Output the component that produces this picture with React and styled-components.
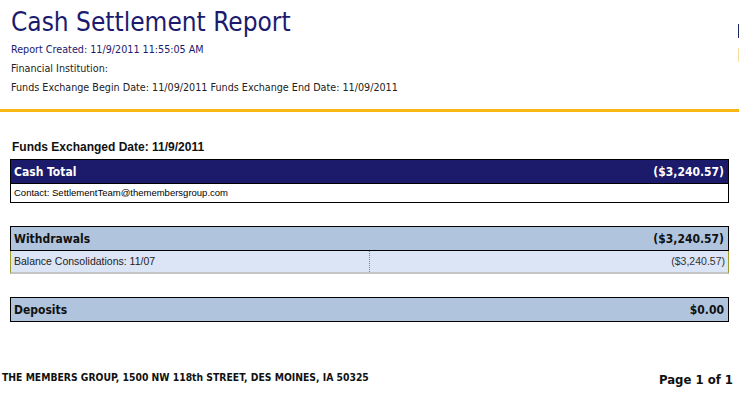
import { styled, createGlobalStyle } from "styled-components";

const GlobalStyle = createGlobalStyle`
  html, body {
    margin: 0;
    padding: 0;
    background: #fff;
  }
  body {
    font-family: "DejaVu Sans", Verdana, sans-serif;
    overflow: hidden;
  }
`;

const sections = [
  {
    title: "Cash Total",
    amount: "($3,240.57)",
    dark: true,
    note: "Contact: SettlementTeam@themembersgroup.com",
  },
  {
    title: "Withdrawals",
    amount: "($3,240.57)",
    rows: [{ label: "Balance Consolidations: 11/07", amount: "($3,240.57)" }],
  },
  { title: "Deposits", amount: "$0.00" },
];

const App = () => {
  return (
    <Page>
      <GlobalStyle />
      <Header>
        <HeaderText>
          <Title>Cash Settlement Report</Title>
          <Meta $blue>Report Created: 11/9/2011 11:55:05 AM</Meta>
          <Meta>Financial Institution:</Meta>
          <Meta>
            Funds Exchange Begin Date: 11/09/2011 Funds Exchange End Date:
            11/09/2011
          </Meta>
        </HeaderText>
        <EdgeMarks>
          <span className="navy" />
          <span className="gold" />
        </EdgeMarks>
      </Header>

      <Body>
        <DateHeading>Funds Exchanged Date: 11/9/2011</DateHeading>
        {sections.map((s) => (
          <Section key={s.title}>
            <SectionHead $dark={s.dark}>
              <span>{s.title}</span>
              <span>{s.amount}</span>
            </SectionHead>
            {s.note && <Note>{s.note}</Note>}
            {s.rows &&
              s.rows.map((r) => (
                <DetailRow key={r.label}>
                  <div className="label">{r.label}</div>
                  <div className="amount">{r.amount}</div>
                </DetailRow>
              ))}
          </Section>
        ))}
      </Body>

      <Footer>
        <span className="address">
          THE MEMBERS GROUP, 1500 NW 118th STREET, DES MOINES, IA 50325
        </span>
        <span className="page">Page 1 of 1</span>
      </Footer>
    </Page>
  );
};

export default App;

const Page = styled.div`
  width: 739px;
  height: 395px;
  display: flex;
  flex-direction: column;
`;

const Header = styled.header`
  display: flex;
  justify-content: space-between;
  border-bottom: 3px solid #f8b712;
  height: 112px;
  box-sizing: border-box;
  padding-left: 11px;
`;

const HeaderText = styled.div`
  display: flex;
  flex-direction: column;
`;

const Title = styled.h1`
  margin: 5px 0 0;
  font-family: "DejaVu Sans Condensed", "DejaVu Sans", sans-serif;
  font-weight: normal;
  font-size: 26px;
  line-height: 35px;
  color: #1c1a6e;
`;

const Meta = styled.div`
  font-family: "DejaVu Sans Condensed", "DejaVu Sans", sans-serif;
  font-size: 10.7px;
  line-height: 19px;
  color: ${(p) => (p.$blue ? "#1c1a6e" : "#222")};
`;

const EdgeMarks = styled.div`
  display: flex;
  flex-direction: column;
  width: 1px;
  padding-top: 24px;
  gap: 10px;

  .navy {
    height: 14px;
    background: #1c2a5e;
  }
  .gold {
    height: 14px;
    background: #f8dca0;
  }
`;

const Body = styled.main`
  padding: 28px 10px 0 10px;
  display: flex;
  flex-direction: column;
`;

const DateHeading = styled.div`
  font-family: "Liberation Sans", Arial, sans-serif;
  font-weight: bold;
  font-size: 12px;
  line-height: 14px;
  color: #111;
  padding-left: 2px;
  margin-bottom: 5px;
`;

const Section = styled.section`
  border: 1px solid #000;
  width: 719px;
  box-sizing: border-box;
  margin-bottom: 23px;
`;

const SectionHead = styled.div`
  display: flex;
  justify-content: space-between;
  align-items: center;
  height: 23px;
  padding: 0 4px 0 3px;
  background: ${(p) => (p.$dark ? "#1b1a6b" : "#b0c4de")};
  color: ${(p) => (p.$dark ? "#fff" : "#111")};
  font-family: "DejaVu Sans Condensed", "DejaVu Sans", sans-serif;
  font-weight: bold;
  font-size: 12px;
  border-bottom: 1px solid #000;

  &:last-child {
    border-bottom: none;
  }
`;

const Note = styled.div`
  height: 18px;
  line-height: 18px;
  padding-left: 3px;
  font-family: "Liberation Sans", Arial, sans-serif;
  font-size: 9.5px;
  color: #000;
  background: #fff;
`;

const DetailRow = styled.div`
  display: grid;
  grid-template-columns: 359px 1fr;
  box-sizing: border-box;
  height: 23px;
  margin: 0 -1px -1px -1px;
  background: #dbe5f6;
  border-left: 1px solid #9c9c2c;
  border-right: 1px solid #9c9c2c;
  border-bottom: 2px solid #c4c4c4;
  font-family: "Liberation Sans", Arial, sans-serif;
  font-size: 10.5px;
  color: #222;

  .label {
    padding-left: 3px;
    line-height: 21px;
    border-right: 1px dotted #8a8a30;
  }
  .amount {
    text-align: right;
    padding-right: 3px;
    line-height: 21px;
    color: #333;
  }
`;

const Footer = styled.footer`
  display: flex;
  justify-content: space-between;
  align-items: flex-end;
  margin-top: 25px;
  padding: 0 6px 0 2px;
  font-family: "DejaVu Sans Condensed", "DejaVu Sans", sans-serif;
  font-weight: bold;
  color: #111;

  .address {
    font-size: 10.3px;
    line-height: 14px;
    margin-bottom: 4px;
  }
  .page {
    font-size: 13px;
    line-height: 16px;
  }
`;
